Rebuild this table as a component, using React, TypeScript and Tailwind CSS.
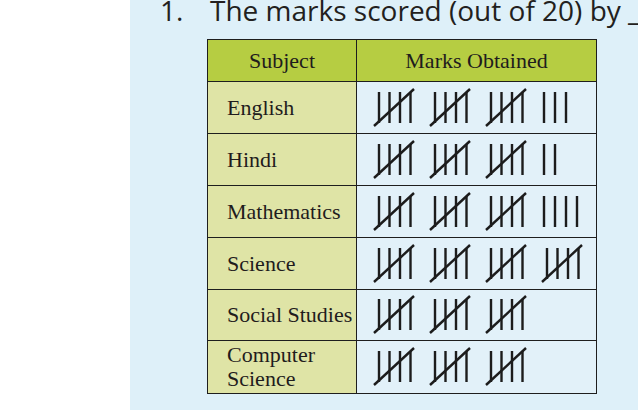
import React from "react";

const INK = "#1c1c1c";

function Group() {
  return (
    <svg width="44" height="40" viewBox="0 0 44 40" className="shrink-0">
      {[6, 16.5, 27, 37.5].map((x) => (
        <line key={x} x1={x} y1={4} x2={x} y2={35} stroke={INK} strokeWidth={2.4} />
      ))}
      <line x1={1} y1={38} x2={41} y2={1} stroke={INK} strokeWidth={2.4} />
    </svg>
  );
}

function Singles({ n }: { n: number }) {
  return (
    <svg width={n * 11 + 4} height="40" viewBox={`0 0 ${n * 11 + 4} 40`} className="shrink-0">
      {Array.from({ length: n }).map((_, i) => (
        <line key={i} x1={3 + i * 11} y1={4} x2={3 + i * 11} y2={35} stroke={INK} strokeWidth={2.4} />
      ))}
    </svg>
  );
}

function Tally({ count }: { count: number }) {
  const groups = Math.floor(count / 5);
  const rest = count % 5;
  return (
    <div className="flex items-center gap-[12px] pl-[16px]">
      {Array.from({ length: groups }).map((_, i) => (
        <Group key={i} />
      ))}
      {rest > 0 && <Singles n={rest} />}
    </div>
  );
}

const rows: { subject: React.ReactNode; count: number; h: string; border: boolean }[] = [
  { subject: "English", count: 18, h: "h-[52px]", border: true },
  { subject: "Hindi", count: 17, h: "h-[52px]", border: true },
  { subject: "Mathematics", count: 19, h: "h-[52px]", border: true },
  { subject: "Science", count: 20, h: "h-[52px]", border: true },
  { subject: "Social Studies", count: 15, h: "h-[51px]", border: true },
  {
    subject: (
      <span className="block leading-[24px]">
        Computer
        <br />
        Science
      </span>
    ),
    count: 15,
    h: "h-[52px]",
    border: false,
  },
];

export default function App() {
  return (
    <div className="w-[638px] h-[410px] overflow-hidden flex bg-white">
      <div className="w-[130px] shrink-0 bg-white" />
      <div className="flex-1 min-w-0 bg-[#def0f9] flex flex-col overflow-hidden">
        <div
          className="flex items-baseline pl-[30px] text-[28px] leading-[26px] text-[#231f20] whitespace-nowrap -mt-[3px]"
          style={{ fontFamily: '"Open Sans", "Noto Sans", sans-serif' }}
        >
          <span className="w-[50px] shrink-0">1.</span>
          <span>The marks scored (out of 20) by ______</span>
        </div>
        <div
          className="ml-[77px] mt-[16px] w-[390px] border border-[#1e1e1e] text-[22px] text-[#1f1c1d]"
          style={{ fontFamily: '"Liberation Serif", "Times New Roman", serif' }}
        >
          <div className="flex h-[42px] border-b border-[#1e1e1e] bg-[#b6cd42]">
            <div className="w-[149px] border-r border-[#1e1e1e] flex items-center justify-center">Subject</div>
            <div className="flex-1 flex items-center justify-center">Marks Obtained</div>
          </div>
          {rows.map((r, i) => (
            <div key={i} className={`flex ${r.h} ${r.border ? "border-b border-[#1e1e1e]" : ""}`}>
              <div className="w-[149px] border-r border-[#1e1e1e] bg-[#dfe4a6] flex items-center pl-[19px] leading-none whitespace-nowrap">
                {r.subject}
              </div>
              <div className="flex-1 bg-[#e2f1f9] flex items-center">
                <Tally count={r.count} />
              </div>
            </div>
          ))}
        </div>
      </div>
    </div>
  );
}
